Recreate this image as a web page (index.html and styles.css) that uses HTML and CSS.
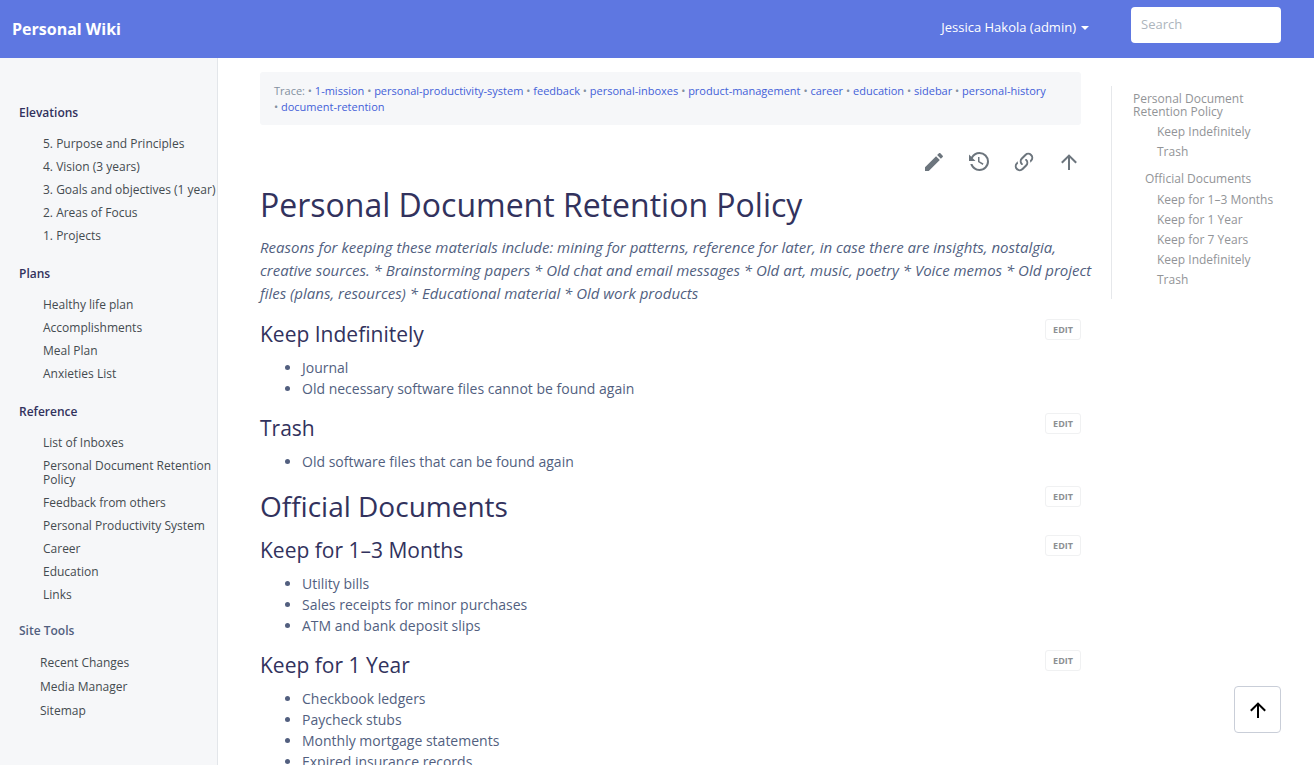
FILE: index.html
```html
<!DOCTYPE html>
<html lang="en">
<head>
<meta charset="utf-8">
<meta name="viewport" content="width=device-width, initial-scale=1">
<title>Personal Document Retention Policy – Personal Wiki</title>
<link rel="stylesheet" href="styles.css">
</head>
<body>
<header class="topbar">
  <a class="brand" href="#">Personal Wiki</a>
  <button class="user-menu" type="button">Jessica Hakola (admin)<span class="caret"></span></button>
  <form class="search" role="search">
    <input class="search-input" type="search" placeholder="Search" aria-label="Search">
  </form>
</header>
<div class="shell">
  <nav class="sidebar" aria-label="Sidebar">
    <h2 class="side-title">Elevations</h2>
    <ul class="side-list">
      <li><a href="#">5. Purpose and Principles</a></li>
      <li><a href="#">4. Vision (3 years)</a></li>
      <li><a href="#">3. Goals and objectives (1 year)</a></li>
      <li><a href="#">2. Areas of Focus</a></li>
      <li><a href="#">1. Projects</a></li>
    </ul>
    <h2 class="side-title">Plans</h2>
    <ul class="side-list">
      <li><a href="#">Healthy life plan</a></li>
      <li><a href="#">Accomplishments</a></li>
      <li><a href="#">Meal Plan</a></li>
      <li><a href="#">Anxieties List</a></li>
    </ul>
    <h2 class="side-title">Reference</h2>
    <ul class="side-list">
      <li><a href="#">List of Inboxes</a></li>
      <li><a href="#">Personal Document Retention Policy</a></li>
      <li><a href="#">Feedback from others</a></li>
      <li><a href="#">Personal Productivity System</a></li>
      <li><a href="#">Career</a></li>
      <li><a href="#">Education</a></li>
      <li><a href="#">Links</a></li>
    </ul>
    <h2 class="side-title side-title-tools">Site Tools</h2>
    <ul class="side-list side-list-tools">
      <li><a href="#">Recent Changes</a></li>
      <li><a href="#">Media Manager</a></li>
      <li><a href="#">Sitemap</a></li>
    </ul>
  </nav>
  <main class="content" id="top">
    <div class="trace">Trace: <span>• <a href="#">1-mission</a></span> <span>• <a href="#">personal-productivity-system</a></span> <span>• <a href="#">feedback</a></span> <span>• <a href="#">personal-inboxes</a></span> <span>• <a href="#">product-management</a></span> <span>• <a href="#">career</a></span> <span>• <a href="#">education</a></span> <span>• <a href="#">sidebar</a></span> <span>• <a href="#">personal-history</a></span> <span>• <a href="#">document-retention</a></span></div>
    <div class="page-tools">
      <a href="#" aria-label="Edit this page"><svg viewBox="0 0 24 24"><path d="M20.71,7.04C21.1,6.65 21.1,6 20.71,5.63L18.37,3.29C18,2.9 17.35,2.9 16.96,3.29L15.12,5.12L18.87,8.87M3,17.25V21H6.75L17.81,9.93L14.06,6.18L3,17.25Z"/></svg></a>
      <a href="#" aria-label="Old revisions"><svg viewBox="0 0 24 24"><path d="M11 7v5.11l4.71 2.79.79-1.28-4-2.37V7m0-5C8.97 2 5.91 3.92 4.27 6.77L2 4.5V11h6.5L5.75 8.25C6.96 5.73 9.5 4 12.5 4a7.5 7.5 0 0 1 7.5 7.5 7.5 7.5 0 0 1-7.5 7.5c-3.27 0-6.03-2.09-7.06-5h-2.1c1.1 4.03 4.77 7 9.16 7 5.24 0 9.5-4.25 9.5-9.5A9.5 9.5 0 0 0 12.5 2z"/></svg></a>
      <a href="#" aria-label="Backlinks"><svg viewBox="0 0 24 24"><path d="M10.59 13.41c.41.39.41 1.03 0 1.42-.39.39-1.03.39-1.42 0a5.003 5.003 0 0 1 0-7.07l3.54-3.54a5.003 5.003 0 0 1 7.07 0 5.003 5.003 0 0 1 0 7.07l-1.49 1.49c.01-.82-.12-1.64-.4-2.42l.47-.48a2.982 2.982 0 0 0 0-4.24 2.982 2.982 0 0 0-4.24 0l-3.53 3.53a2.982 2.982 0 0 0 0 4.24m2.82-4.24c.39-.39 1.03-.39 1.42 0a5.003 5.003 0 0 1 0 7.07l-3.54 3.54a5.003 5.003 0 0 1-7.07 0 5.003 5.003 0 0 1 0-7.07l1.49-1.49c-.01.82.12 1.64.4 2.43l-.47.47a2.982 2.982 0 0 0 0 4.24 2.982 2.982 0 0 0 4.24 0l3.53-3.53a2.982 2.982 0 0 0 0-4.24.973.973 0 0 1 0-1.42z"/></svg></a>
      <a href="#top" aria-label="Back to top"><svg viewBox="0 0 24 24"><path d="M13,20H11V8L5.5,13.5L4.08,12.08L12,4.16L19.92,12.08L18.5,13.5L13,8V20Z"/></svg></a>
    </div>
    <h1 class="page-title">Personal Document Retention Policy</h1>
    <p class="intro">Reasons for keeping these materials include: mining for patterns, reference for later, in case there are insights, nostalgia, creative sources. * Brainstorming papers * Old chat and email messages * Old art, music, poetry * Voice memos * Old project files (plans, resources) * Educational material * Old work products</p>

    <div class="section-head"><h3 class="section-minor">Keep Indefinitely</h3><button class="edit" type="button">Edit</button></div>
    <ul class="items">
      <li>Journal</li>
      <li>Old necessary software files cannot be found again</li>
    </ul>
    <div class="section-head"><h3 class="section-minor">Trash</h3><button class="edit" type="button">Edit</button></div>
    <ul class="items">
      <li>Old software files that can be found again</li>
    </ul>
    <div class="section-head"><h2 class="section-major">Official Documents</h2><button class="edit" type="button">Edit</button></div>
    <div class="section-head"><h3 class="section-minor">Keep for 1–3 Months</h3><button class="edit" type="button">Edit</button></div>
    <ul class="items">
      <li>Utility bills</li>
      <li>Sales receipts for minor purchases</li>
      <li>ATM and bank deposit slips</li>
    </ul>
    <div class="section-head"><h3 class="section-minor">Keep for 1 Year</h3><button class="edit" type="button">Edit</button></div>
    <ul class="items">
      <li>Checkbook ledgers</li>
      <li>Paycheck stubs</li>
      <li>Monthly mortgage statements</li>
      <li>Expired insurance records</li>
    </ul>
  </main>
  <aside class="toc-column">
    <nav class="toc" aria-label="Table of contents">
      <a class="toc-page" href="#">Personal Document Retention Policy</a>
      <a class="toc-minor" href="#">Keep Indefinitely</a>
      <a class="toc-minor" href="#">Trash</a>
      <a class="toc-major" href="#">Official Documents</a>
      <a class="toc-minor" href="#">Keep for 1–3 Months</a>
      <a class="toc-minor" href="#">Keep for 1 Year</a>
      <a class="toc-minor" href="#">Keep for 7 Years</a>
      <a class="toc-minor" href="#">Keep Indefinitely</a>
      <a class="toc-minor" href="#">Trash</a>
    </nav>
  </aside>
</div>
<a class="to-top" href="#top" aria-label="Scroll to top"><svg viewBox="0 0 24 24"><path d="M13,20H11V8L5.5,13.5L4.08,12.08L12,4.16L19.92,12.08L18.5,13.5L13,8V20Z"/></svg></a>
</body>
</html>
```
FILE: styles.css
```css
* { box-sizing: border-box; }

body {
  display: flex;
  flex-direction: column;
  height: 100vh;
  margin: 0;
  overflow: hidden;
  background: #fff;
  color: #525f7f;
  font-family: "Open Sans", "Noto Sans", sans-serif;
  font-size: 14px;
}

a { color: inherit; text-decoration: none; }
h1, h2, h3, p, ul { margin: 0; padding: 0; font-weight: 400; }

/* Top bar */
.topbar {
  display: flex;
  flex: none;
  align-items: flex-start;
  height: 58px;
  padding: 7px 33px 0 12px;
  background: #5e77e1;
  color: #fff;
}
.brand {
  margin-right: auto;
  font-size: 16px;
  font-weight: 700;
  line-height: 44px;
}
.user-menu {
  display: flex;
  align-items: center;
  gap: 5px;
  margin-right: 42px;
  padding: 0;
  border: 0;
  background: none;
  color: inherit;
  font: inherit;
  font-size: 13px;
  line-height: 41px;
}
.caret {
  border: 4px solid transparent;
  border-top-color: currentColor;
  border-bottom: 0;
}
.search-input {
  display: block;
  width: 150px;
  height: 36px;
  padding: 0 10px 2px;
  border: 0;
  border-radius: 4px;
  background: #fff;
  color: #525f7f;
  font: inherit;
  font-size: 13px;
  appearance: none;
}
.search-input::placeholder { color: #adb5bd; }

/* Page frame */
.shell {
  display: grid;
  flex: 1;
  grid-template-columns: 218px minmax(0, 1fr) 203px;
  min-height: 0;
}

/* Sidebar */
.sidebar {
  padding: 46px 0 0 19px;
  overflow: hidden;
  border-right: 1px solid #e3e6ea;
  background: #f6f7f9;
}
.side-title {
  margin-bottom: 15px;
  color: #32325d;
  font-size: 12px;
  font-weight: 600;
  line-height: 18px;
}
.side-title-tools {
  margin: -2px 0 16px;
  color: #525f7f;
}
.side-list {
  display: grid;
  gap: 9px;
  margin-bottom: 22px;
  padding-left: 24px;
  color: #444b50;
  font-size: 12px;
  line-height: 14px;
  list-style: none;
}
.side-list-tools {
  gap: 10px;
  padding-left: 21px;
}

/* Article */
.content {
  padding: 14px 30px 24px 42px;
  overflow-y: auto;
  scrollbar-width: none;
}
.trace {
  padding: 11px 14px 10px;
  border-radius: 3px;
  background: #f6f7f9;
  color: #8490a0;
  font-size: 11px;
  line-height: 16px;
}
.trace span { white-space: nowrap; }
.trace a { color: #435fd8; }
.page-tools {
  display: flex;
  justify-content: flex-end;
  gap: 21px;
  margin: 25px 0 10px;
}
.page-tools svg {
  display: block;
  width: 24px;
  height: 24px;
  fill: #6c757d;
}
.page-title {
  margin-bottom: 10px;
  color: #32325d;
  font-size: 32px;
  line-height: 42px;
}
.intro {
  margin: 0 -16px 14px 0;
  font-size: 15px;
  font-style: italic;
  line-height: 23px;
}
.section-head {
  display: flex;
  align-items: flex-start;
  justify-content: space-between;
  margin-bottom: 8px;
  color: #32325d;
}
.section-major { font-size: 28px; line-height: 41px; }
.section-minor { font-size: 21px; line-height: 30px; }
.edit {
  height: 21px;
  padding: 0 7px;
  border: 1px solid #f0f1f2;
  border-radius: 3px;
  background: #fff;
  color: #8d9093;
  font: inherit;
  font-size: 9px;
  font-weight: 700;
  text-transform: uppercase;
}
.items {
  margin-bottom: 14px;
  padding-left: 42px;
  line-height: 21px;
}

/* Table of contents */
.toc-column { padding: 28px 0 0; }
.toc {
  display: grid;
  gap: 7px;
  padding: 6px 33px 13px 21px;
  border-left: 1px solid #e6e8eb;
  color: #929497;
  font-size: 12px;
  line-height: 13px;
}
.toc-major { margin: 7px 0 1px; padding-left: 12px; }
.toc-minor { padding-left: 24px; }

/* Floating button */
.to-top {
  position: fixed;
  right: 33px;
  bottom: 32px;
  display: grid;
  place-items: center;
  width: 47px;
  height: 47px;
  border: 1px solid #c9ced8;
  border-radius: 4px;
  background: #fff;
}
.to-top svg { width: 24px; height: 24px; }
```
